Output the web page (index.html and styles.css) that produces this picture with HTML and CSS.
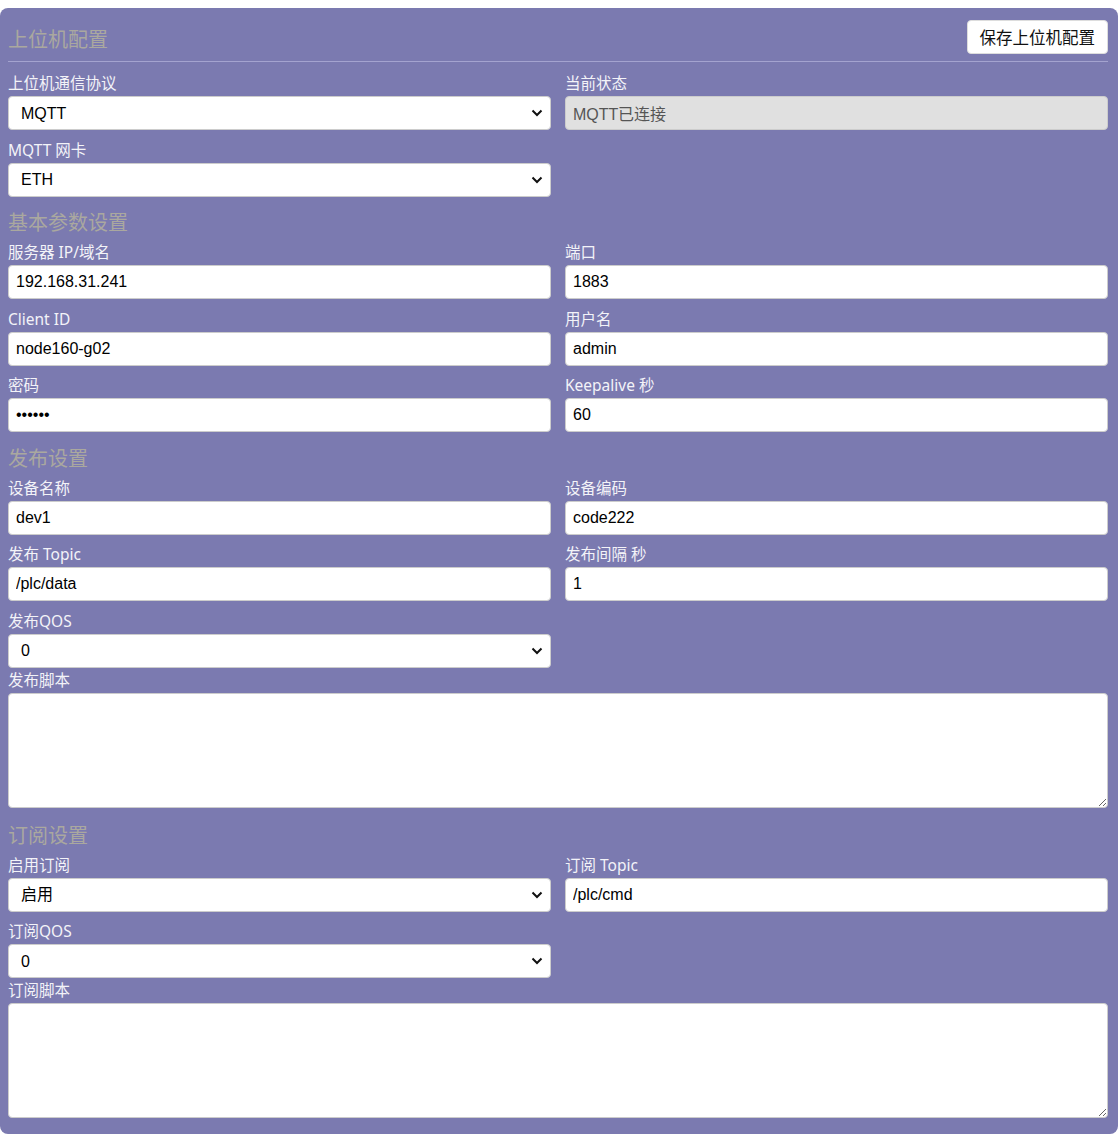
FILE: index.html
```html
<!DOCTYPE html>
<html lang="zh-CN">

<head>
    <meta charset="UTF-8">
    <meta name="viewport" content="width=device-width, initial-scale=1.0">
    <title>上位机配置</title>
    <link rel="stylesheet" href="styles.css">
</head>

<body>

    <div class="panel">
        <div class="panel-head">
            <h2>上位机配置</h2>
            <button type="button" class="btn-save">保存上位机配置</button>
        </div>

        <div class="grid first">
            <div class="field">
                <label for="protocol">上位机通信协议</label>
                <div class="select-wrap">
                    <select id="protocol">
                        <option>MQTT</option>
                    </select>
                    <svg class="chev" viewBox="0 0 12 8"><path d="M1.5 1.5 6 6l4.5-4.5"/></svg>
                </div>
            </div>
            <div class="field">
                <label for="status">当前状态</label>
                <input type="text" id="status" value="MQTT已连接" disabled>
            </div>
            <div class="field">
                <label for="netcard">MQTT 网卡</label>
                <div class="select-wrap">
                    <select id="netcard">
                        <option>ETH</option>
                    </select>
                    <svg class="chev" viewBox="0 0 12 8"><path d="M1.5 1.5 6 6l4.5-4.5"/></svg>
                </div>
            </div>
        </div>

        <h3 class="section-title">基本参数设置</h3>
        <div class="grid">
            <div class="field">
                <label for="host">服务器 IP/域名</label>
                <input type="text" id="host" value="192.168.31.241">
            </div>
            <div class="field">
                <label for="port">端口</label>
                <input type="text" id="port" value="1883">
            </div>
            <div class="field">
                <label for="clientId">Client ID</label>
                <input type="text" id="clientId" value="node160-g02">
            </div>
            <div class="field">
                <label for="user">用户名</label>
                <input type="text" id="user" value="admin">
            </div>
            <div class="field">
                <label for="pass">密码</label>
                <input type="password" id="pass" value="123456">
            </div>
            <div class="field">
                <label for="keepalive">Keepalive 秒</label>
                <input type="text" id="keepalive" value="60">
            </div>
        </div>

        <h3 class="section-title">发布设置</h3>
        <div class="grid">
            <div class="field">
                <label for="devName">设备名称</label>
                <input type="text" id="devName" value="dev1">
            </div>
            <div class="field">
                <label for="devCode">设备编码</label>
                <input type="text" id="devCode" value="code222">
            </div>
            <div class="field">
                <label for="pubTopic">发布 Topic</label>
                <input type="text" id="pubTopic" value="/plc/data">
            </div>
            <div class="field">
                <label for="pubInterval">发布间隔 秒</label>
                <input type="text" id="pubInterval" value="1">
            </div>
            <div class="field tight">
                <label for="pubQos">发布QOS</label>
                <div class="select-wrap">
                    <select id="pubQos">
                        <option>0</option>
                    </select>
                    <svg class="chev" viewBox="0 0 12 8"><path d="M1.5 1.5 6 6l4.5-4.5"/></svg>
                </div>
            </div>
        </div>
        <div class="field script">
            <label for="pubScript">发布脚本</label>
            <textarea id="pubScript"></textarea>
        </div>

        <h3 class="section-title">订阅设置</h3>
        <div class="grid">
            <div class="field">
                <label for="subEnable">启用订阅</label>
                <div class="select-wrap">
                    <select id="subEnable">
                        <option>启用</option>
                    </select>
                    <svg class="chev" viewBox="0 0 12 8"><path d="M1.5 1.5 6 6l4.5-4.5"/></svg>
                </div>
            </div>
            <div class="field">
                <label for="subTopic">订阅 Topic</label>
                <input type="text" id="subTopic" value="/plc/cmd">
            </div>
            <div class="field tight">
                <label for="subQos">订阅QOS</label>
                <div class="select-wrap">
                    <select id="subQos">
                        <option>0</option>
                    </select>
                    <svg class="chev" viewBox="0 0 12 8"><path d="M1.5 1.5 6 6l4.5-4.5"/></svg>
                </div>
            </div>
        </div>
        <div class="field script last">
            <label for="subScript">订阅脚本</label>
            <textarea id="subScript"></textarea>
        </div>
    </div>

</body>

</html>
```

FILE: styles.css
```css
    html,
    body {
        overflow: hidden;
    }

    body {
        background: #fff;
        margin: 8px 0 0 0;
        padding: 0;
        font-family: 'Noto Sans', 'Noto Sans CJK SC', sans-serif;
    }

    .panel {
        width: 1118px;
        box-sizing: border-box;
        background-color: #7b7ab0;
        border-radius: 8px;
        padding: 0 10px 16px 8px;
    }

    .panel-head {
        display: flex;
        justify-content: space-between;
        align-items: flex-end;
        padding: 12px 0 7px;
        border-bottom: 1px solid #a4a3cf;
    }

    .panel-head h2,
    .section-title {
        margin: 0;
        font-size: 20px;
        font-weight: normal;
        color: #aaa89f;
    }

    .panel-head h2 {
        line-height: 28px;
    }

    .btn-save {
        height: 34px;
        padding: 0 12px;
        background-color: #fff;
        border: 1px solid #ddd;
        border-radius: 4px;
        font-family: 'Noto Sans CJK SC', sans-serif;
        font-size: 16.5px;
        color: #111;
        cursor: pointer;
    }

    .section-title {
        line-height: 26px;
        margin: 4px 0 6px;
    }

    .grid {
        display: grid;
        grid-template-columns: 1fr 1fr;
        column-gap: 14px;
    }

    .grid.first {
        margin-top: 11px;
    }

    .field {
        margin-bottom: 9.5px;
    }

    .field.tight {
        margin-bottom: 2px;
    }

    .field.script {
        margin-bottom: 15px;
    }

    .field.last {
        margin-bottom: 0;
    }

    .field label {
        display: block;
        font-size: 15.5px;
        line-height: 20px;
        margin-bottom: 3px;
        color: #f3f3f8;
    }

    input,
    select,
    textarea {
        display: block;
        width: 100%;
        box-sizing: border-box;
        border: 1px solid #ccc;
        border-radius: 4px;
        background-color: #fff;
        font-family: 'Liberation Sans', Arial, sans-serif;
        font-size: 16px;
        color: #000;
        margin: 0;
    }

    input,
    select {
        height: 34px;
    }

    input {
        padding: 0 7px;
    }

    select {
        appearance: none;
        -webkit-appearance: none;
        padding: 0 30px 0 12px;
    }

    .select-wrap {
        position: relative;
    }

    /* dropdown chevron drawn over the select's right edge */
    .chev {
        position: absolute;
        right: 8px;
        top: 13px;
        width: 12px;
        height: 8px;
        fill: none;
        stroke: #111;
        stroke-width: 2;
        pointer-events: none;
    }

    input:disabled {
        background-color: #e0e0e0;
        color: #555;
    }

    textarea {
        height: 115px;
        padding: 6px 8px;
        resize: vertical;
    }
```
